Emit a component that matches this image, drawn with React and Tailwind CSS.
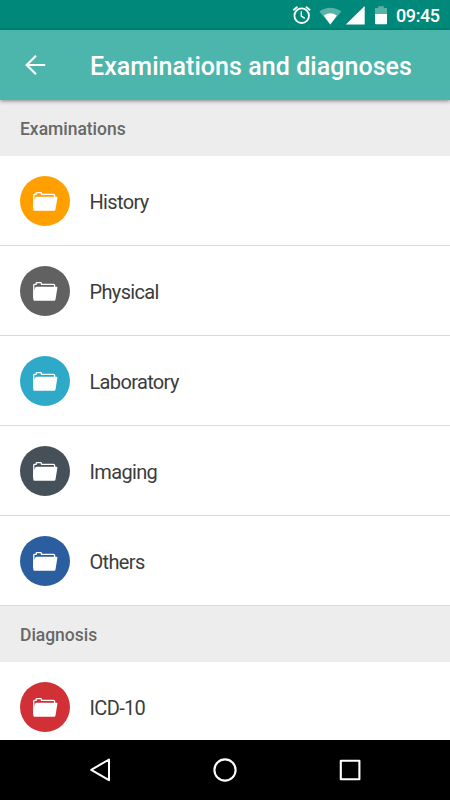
const examinations = [
  { label: "History", color: "bg-[#ffa000]" },
  { label: "Physical", color: "bg-[#616161]" },
  { label: "Laboratory", color: "bg-[#2eaac8]" },
  { label: "Imaging", color: "bg-[#455059]" },
  { label: "Others", color: "bg-[#2b5e9e]" },
];

const diagnoses = [{ label: "ICD-10", color: "bg-[#d13036]" }];

function FolderIcon() {
  return (
    <svg width="26" height="20" viewBox="0 0 26 20" fill="none">
      <path
        d="M1.8 17V4.1q0-.8.8-.8H4.2V2.4q0-.8.8-.8h3.6q.8 0 .8.8v.9H21.4q1.2 0 1.2 1.2v1.6"
        stroke="#fff"
        strokeWidth="1.3"
        strokeLinejoin="round"
      />
      <path
        d="M4.6 5.7H24.4q1.1 0 1 1.1L23.5 18.4q-.2 1.3-1.5 1.3H2.6q-1.2 0-1.3-1.2V10.5L3.2 6.8q.4-1.1 1.4-1.1Z"
        fill="#fff"
      />
    </svg>
  );
}

function StatusBar() {
  return (
    <div className="flex h-[30px] shrink-0 items-center bg-[#00897a] pl-[291px] text-white">
      <svg width="105" height="30" viewBox="291 0 105 30" fill="none" className="shrink-0">
        <circle cx="301.7" cy="15.7" r="7.3" stroke="#fff" strokeWidth="1.8" />
        <path d="M301.3 11.3v4.9l3.5 2.2" stroke="#fff" strokeWidth="1.4" />
        <path d="M293.3 10.2l4.2-3.5M305.9 6.7l4.2 3.5" stroke="#fff" strokeWidth="1.8" />
        <path d="M319.3 11.5Q330.3 4 341.3 11.5L330.3 24.4Z" fill="#fff" fillOpacity=".35" />
        <path d="M323.8 15.4Q330.3 11 336.8 15.4L330.3 24.4Z" fill="#fff" />
        <path d="M345.8 24.4L364.7 6V24.4Z" fill="#fff" />
        <path d="M375 14V8.1H378.2V6.2H383.8V8.1H387V14Z" fill="#fff" fillOpacity=".35" />
        <path d="M375 14H387V23.2q0 1-1 1H376q-1 0-1-1Z" fill="#fff" />
      </svg>
      <span className="pt-[2px] text-[18px] leading-none font-medium tracking-[-0.4px]">09:45</span>
    </div>
  );
}

function AppBar() {
  return (
    <header className="z-10 flex h-[70px] shrink-0 items-center bg-[#4db6ac] pl-[25px] text-white shadow-[0_1px_4px_rgba(0,0,0,0.45)]">
      <svg width="21" height="20" viewBox="0 0 21 20" fill="none" stroke="#fff" strokeWidth="2.2">
        <path d="M20.2 10H2M11 .8L1.7 10l9.3 9.2" />
      </svg>
      <h1 className="ml-[44px] pt-[3px] text-[25px] leading-none font-medium tracking-[0.05px] whitespace-nowrap">
        Examinations and diagnoses
      </h1>
    </header>
  );
}

function SectionTitle({ children }) {
  return (
    <h2 className="flex h-14 shrink-0 items-center bg-[#ededed] pt-[3px] pl-5 text-[17.5px] font-medium tracking-[-0.03px] text-[#686868]">
      {children}
    </h2>
  );
}

function Row({ label, color }) {
  return (
    <li className="flex h-[90px] shrink-0 items-center border-b border-[#d9d9d9] pl-5">
      <span className={`flex size-[50px] items-center justify-center rounded-full ${color}`}>
        <FolderIcon />
      </span>
      <span className="ml-[19.5px] pt-[2px] text-[20px] tracking-[-0.65px] text-[#3c3c3c]">{label}</span>
    </li>
  );
}

function NavigationBar() {
  return (
    <nav className="flex h-[60px] shrink-0 items-center justify-between bg-black px-[88px]">
      <svg width="24" height="26" viewBox="0 0 24 26" fill="none" stroke="#fff" strokeWidth="2" strokeLinejoin="round">
        <path d="M21 2.5V23.2L3.2 12.8Z" />
      </svg>
      <svg width="26" height="26" viewBox="0 0 26 26" fill="none" stroke="#fff" strokeWidth="2.1">
        <circle cx="13" cy="13" r="10.6" />
      </svg>
      <svg width="24" height="24" viewBox="0 0 24 24" fill="none" stroke="#fff" strokeWidth="2.1" strokeLinejoin="round">
        <rect x="2.8" y="2.8" width="18.6" height="18.4" />
      </svg>
    </nav>
  );
}

export default function App() {
  return (
    <div className="flex h-[800px] w-[450px] flex-col overflow-hidden bg-white font-['Roboto',sans-serif]">
      <StatusBar />
      <AppBar />
      <main className="flex min-h-0 flex-1 flex-col overflow-hidden">
        <SectionTitle>Examinations</SectionTitle>
        <ul>
          {examinations.map((item) => (
            <Row key={item.label} {...item} />
          ))}
        </ul>
        <SectionTitle>Diagnosis</SectionTitle>
        <ul>
          {diagnoses.map((item) => (
            <Row key={item.label} {...item} />
          ))}
        </ul>
      </main>
      <NavigationBar />
    </div>
  );
}
